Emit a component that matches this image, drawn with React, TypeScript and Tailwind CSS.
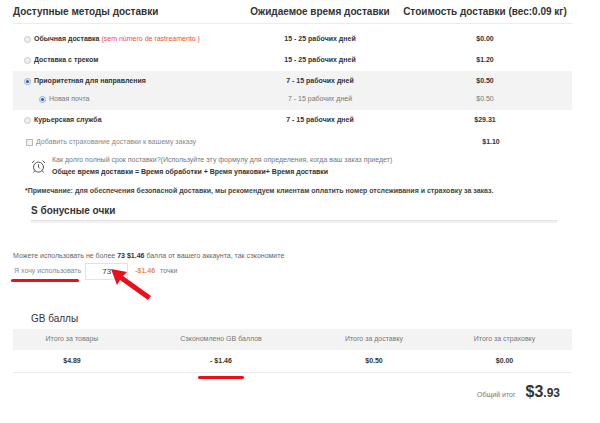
import { AlarmClock } from "lucide-react";

type Row = {
  label: string;
  extra?: string;
  time: string;
  price: string;
  checked?: boolean;
  sub?: boolean;
};

function Radio({ checked }: { checked?: boolean }) {
  return (
    <span
      className={
        "inline-flex h-[7px] w-[7px] shrink-0 items-center justify-center rounded-full border " +
        (checked ? "border-[#9bb5d6] bg-[#dfe9f5]" : "border-[#c8c8c8] bg-[#f0f0f0]")
      }
    >
      {checked && <span className="h-[3px] w-[3px] rounded-full bg-[#2b5ea8]" />}
    </span>
  );
}

function ShipRow({ row }: { row: Row }) {
  const tone = row.sub ? "text-[#777] font-normal" : "text-[#333] font-semibold";
  return (
    <div className={"grid grid-cols-[237px_140px_182px] items-center " + (row.sub ? "h-[14px]" : "h-[21px]")}>
      <div className={"flex items-center gap-[3px] " + (row.sub ? "pl-[26px]" : "pl-[11px]")}>
        <Radio checked={row.checked} />
        <span className={"text-[7px] " + tone}>
          {row.label}
          {row.extra && <span className="font-normal text-[#f04a4a]"> {row.extra}</span>}
        </span>
      </div>
      <div className={"text-center text-[7px] " + tone}>{row.time}</div>
      <div className={"pl-[8px] text-center text-[7px] " + tone}>{row.price}</div>
    </div>
  );
}

export default function App() {
  const top: Row[] = [
    { label: "Обычная доставка", extra: "(sem número de rastreamento )", time: "15 - 25 рабочих дней", price: "$0.00" },
    { label: "Доставка с треком", time: "15 - 25 рабочих дней", price: "$1.20" },
  ];

  return (
    <div className="relative h-[423px] w-[600px] overflow-hidden bg-white font-['Liberation_Sans',Arial,sans-serif] text-[#333]">
      <div className="ml-[13px] w-[559px]">
        {/* header */}
        <div className="grid h-[24px] grid-cols-[237px_140px_182px] items-center border-b border-[#ececec] text-[10px] font-bold text-[#333]">
          <div>Доступные методы доставки</div>
          <div className="text-center">Ожидаемое время доставки</div>
          <div className="pl-[8px] text-center">Стоимость доставки (вес:0.09 кг)</div>
        </div>

        <div className="pt-[5px]">
          {top.map((r) => (
            <ShipRow key={r.label} row={r} />
          ))}
        </div>

        <div className="bg-[#f3f3f3] pb-[4px]">
          <ShipRow row={{ label: "Приоритетная для направления", time: "7 - 15 рабочих дней", price: "$0.50", checked: true }} />
          <ShipRow row={{ label: "Новая почта", time: "7 - 15 рабочих дней", price: "$0.50", checked: true, sub: true }} />
        </div>

        <ShipRow row={{ label: "Курьерская служба", time: "7 - 15 рабочих дней", price: "$29.31" }} />

        <div className="grid h-[22px] grid-cols-[237px_140px_182px] items-center">
          <div className="flex items-center gap-[3px] pl-[13px]">
            <span className="h-[7px] w-[7px] border border-[#bbb] bg-[#f2f2f2]" />
            <span className="text-[7px] text-[#888]">Добавить страхование доставки к вашему заказу</span>
          </div>
          <div />
          <div className="pl-[20px] text-center text-[7px] font-semibold text-[#333]">$1.10</div>
        </div>

        <div className="flex items-center gap-[6px] pl-[18px] pt-[1px]">
          <AlarmClock size={15} strokeWidth={1.6} className="text-[#555]" />
          <div className="leading-[12px]">
            <div className="text-[7px] text-[#777]">
              Как долго полный срок поставки?(Используйте эту формулу для определения, когда ваш заказ приедет)
            </div>
            <div className="text-[7px] font-semibold text-[#333]">
              Общее время доставки = Время обработки + Время упаковки+ Время доставки
            </div>
          </div>
        </div>

        <div className="pl-[12px] pt-[8px] text-[7px] font-semibold text-[#444]">
          *Примечание: для обеспечения безопасной доставки, мы рекомендуем клиентам оплатить номер отслеживания и страховку за заказ.
        </div>

        <div className="ml-[18px] mr-[15px] mt-[6px] border-b border-[#e2e2e2] pb-[2px] text-[10px] font-bold text-[#333] shadow-[0_2px_0_#f1f1f1]">
          S бонусные очки
        </div>

        <div className="pt-[30px] text-[7px] text-[#666]">
          Можете использовать не более <b className="text-[#333]">73 $1.46</b>  баллa от вашего аккаунта, так сэкономите
        </div>
        <div className="mt-[2px] flex items-center">
          <span className="pl-[1px] text-[7px] text-[#888]">Я хочу использовать</span>
          <span className="ml-[4px] flex h-[17px] w-[43px] items-center border border-[#e3e3e3] pl-[16px] text-[8px] text-[#333]">
            73
          </span>
          <span className="ml-[7px] text-[7px] font-semibold text-[#f08a4a]">-$1.46</span>
          <span className="ml-[5px] text-[7px] text-[#777]">точки</span>
        </div>

        <div className="ml-[18px] pt-[31px] text-[10px] text-[#333]">GB баллы</div>

        <div className="mt-[3px] border-b border-[#ececec]">
          <div className="grid h-[21px] grid-cols-[118px_180px_126px_135px] items-center bg-[#f3f3f3] text-center text-[7px] text-[#777]">
            <div>Итого за товары</div>
            <div>Сэкономлено GB баллов</div>
            <div>Итого за доставку</div>
            <div>Итого за страховку</div>
          </div>
          <div className="grid h-[22px] grid-cols-[118px_180px_126px_135px] items-center text-center text-[7px] font-semibold text-[#333]">
            <div>$4.89</div>
            <div>- $1.46</div>
            <div>$0.50</div>
            <div>$0.00</div>
          </div>
        </div>

        <div className="mr-[12px] mt-[7px] flex items-baseline justify-end gap-[10px]">
          <span className="text-[7px] text-[#777]">Общий итог</span>
          <span className="font-bold text-[#333]">
            <span className="text-[16px]">$3</span>
            <span className="text-[12px]">.93</span>
          </span>
        </div>
      </div>

      {/* annotations */}
      <div className="absolute left-[11px] top-[279px] h-[3px] w-[68px] rounded-full bg-[#e8101a]" />
      <div className="absolute left-[198px] top-[376px] h-[3px] w-[46px] rounded-full bg-[#e8101a]" />
      <svg className="absolute left-[105px] top-[264px]" width="50" height="40" viewBox="0 0 50 40">
        <polygon points="6,5 22,8 18,12 46,32 43,36 15,16 12,21" fill="#e8101a" />
      </svg>
    </div>
  );
}
